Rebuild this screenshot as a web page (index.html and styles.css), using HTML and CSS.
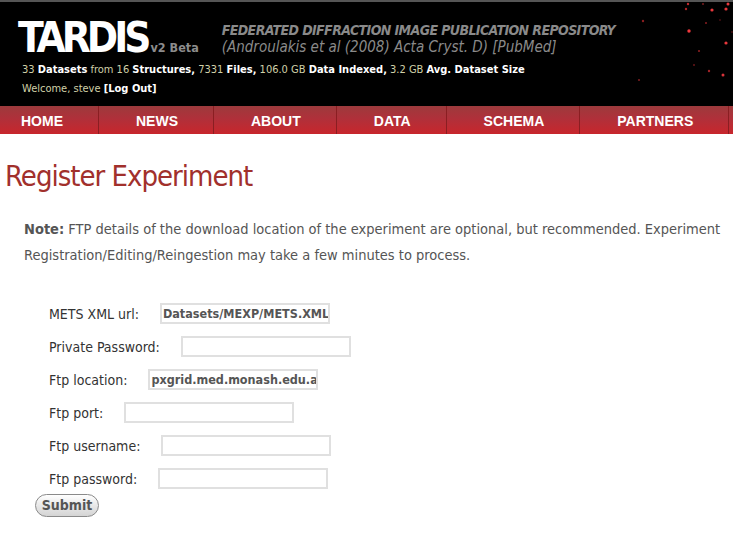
FILE: index.html
```html
<!DOCTYPE html>
<html>
<head>
<meta charset="utf-8">
<title>TARDIS - Register Experiment</title>
<link rel="stylesheet" href="styles.css">
</head>
<body>
<div class="header">
  <svg class="stars" width="110" height="90" viewBox="0 0 110 90">
    <circle cx="48" cy="2" r="1.2" fill="#c0282c"/>
    <circle cx="63" cy="2" r="1" fill="#7a1c1e"/>
    <circle cx="46" cy="7" r="1.2" fill="#b02428"/>
    <circle cx="72" cy="8" r="1.6" fill="#e8383c"/>
    <circle cx="86" cy="7" r="1.6" fill="#e8383c"/>
    <circle cx="88" cy="2" r="1.5" fill="#e8383c"/>
    <circle cx="66" cy="21" r="1" fill="#8a1e20"/>
    <circle cx="49" cy="29" r="1.7" fill="#f0383c"/>
    <circle cx="86" cy="41" r="1.6" fill="#e8383c"/>
    <circle cx="59" cy="49" r="1.1" fill="#8a1e20"/>
    <circle cx="54" cy="63" r="1" fill="#6a1618"/>
    <circle cx="69" cy="69" r="1.2" fill="#a02226"/>
    <circle cx="83" cy="73" r="1.5" fill="#d8333a"/>
    <circle cx="3" cy="19" r="1.2" fill="#8a1e20"/>
    <circle cx="-1" cy="78" r="1.1" fill="#7a1c1e"/>
    <circle cx="92" cy="30" r="0.9" fill="#4a1012"/>
    <circle cx="80" cy="18" r="0.9" fill="#4a1012"/>
  </svg>
  <div class="brand-row">
    <div class="brand">
      <span class="logo">TARDIS</span><span class="version">v2 Beta</span>
    </div>
    <div class="tagline">
      <div class="tag-title">FEDERATED DIFFRACTION IMAGE PUBLICATION REPOSITORY</div>
      <div class="tag-cite">(Androulakis et al (2008) Acta Cryst. D) [PubMed]</div>
    </div>
  </div>
  <div class="stats">
    <span class="num">33</span> <b>Datasets</b> <span class="num">from 16</span> <b>Structures,</b> <span class="num">7331</span> <b>Files,</b> <span class="num">106.0 GB</span> <b>Data Indexed,</b> <span class="num">3.2 GB</span> <b>Avg. Dataset Size</b>
  </div>
  <div class="welcome">
    <span class="num">Welcome, steve</span> <b>[Log Out]</b>
  </div>
</div>
<nav class="nav">
  <a class="nav-item first">HOME</a>
  <a class="nav-item">NEWS</a>
  <a class="nav-item">ABOUT</a>
  <a class="nav-item">DATA</a>
  <a class="nav-item">SCHEMA</a>
  <a class="nav-item">PARTNERS</a>
</nav>
<div class="content">
  <h1 class="title">Register Experiment</h1>
  <p class="note"><b>Note:</b> FTP details of the download location of the experiment are optional, but recommended. Experiment Registration/Editing/Reingestion may take a few minutes to process.</p>
  <form class="form">
    <div class="row"><label>METS XML url:</label><input class="field" type="text" value="Datasets/MEXP/METS.XML"></div>
    <div class="row"><label>Private Password:</label><input class="field" type="text" value=""></div>
    <div class="row"><label>Ftp location:</label><input class="field" type="text" value="pxgrid.med.monash.edu.au"></div>
    <div class="row"><label>Ftp port:</label><input class="field" type="text" value=""></div>
    <div class="row"><label>Ftp username:</label><input class="field" type="text" value=""></div>
    <div class="row"><label>Ftp password:</label><input class="field" type="text" value=""></div>
    <button class="submit" type="button">Submit</button>
  </form>
</div>
</body>
</html>
```
FILE: styles.css
```css
html, body {
  margin: 0;
  padding: 0;
  background: #fff;
}
body {
  font-family: "DejaVu Sans", sans-serif;
  font-stretch: condensed;
  width: 733px;
  overflow: hidden;
}
.header {
  position: relative;
  background: #000;
  border-top: 2px solid #555;
  height: 104px;
  color: #fff;
}
.stars {
  position: absolute;
  top: 0;
  left: 640px;
  overflow: visible;
}
.brand-row {
  display: flex;
  align-items: flex-start;
  padding-left: 18px;
  padding-top: 14px;
}
.brand {
  display: flex;
  align-items: baseline;
  height: 44px;
}
.logo {
  font-size: 42px;
  font-weight: bold;
  line-height: 44px;
  color: #fff;
  letter-spacing: -4px;
}
.version {
  font-size: 12.5px;
  font-weight: bold;
  color: #8c8c8c;
  margin-left: 3px;
}
.tagline {
  margin-left: 23px;
  padding-top: 6px;
  color: #8a8a8a;
  font-style: italic;
  font-size: 15px;
  line-height: 17px;
}
.tag-title {
  font-weight: bold;
  font-size: 14px;
  letter-spacing: -0.6px;
}
.stats, .welcome {
  padding-left: 22px;
  font-size: 11px;
  line-height: 19px;
}
.num {
  color: #d0d0a8;
}
.stats b, .welcome b {
  color: #fff;
}
.nav {
  display: flex;
  height: 28px;
  background: linear-gradient(#9c3a3c, #b0303a 45%, #c8262c);
}
.nav-item {
  font-family: "Liberation Sans", Arial, sans-serif;
  font-stretch: normal;
  font-weight: bold;
  font-size: 14px;
  color: #fff;
  line-height: 31px;
  padding: 0 35px 0 37px;
  border-right: 1px solid #8a1e22;
  white-space: nowrap;
}
.nav-item.first {
  padding-left: 21px;
}
.content {
  padding: 0 0 0 5px;
}
.title {
  margin: 25px 0 0 0;
  font-size: 29px;
  font-weight: normal;
  letter-spacing: -1px;
  color: #a1302c;
  line-height: 34px;
}
.note {
  margin: 23px 0 0 19px;
  font-size: 14.5px;
  line-height: 26px;
  color: #555;
}
.form {
  margin: 29px 0 0 0;
}
.row {
  display: flex;
  align-items: center;
  height: 33px;
  padding-left: 44px;
  font-size: 14px;
  color: #333;
}
.row label {
  margin-right: 21px;
}
.field {
  width: 170px;
  height: 21px;
  box-sizing: border-box;
  border: 2px solid #e0e0e0;
  padding: 0 0 0 1px;
  font-family: "DejaVu Sans", sans-serif;
  font-stretch: condensed;
  font-size: 12.5px;
  font-weight: bold;
  color: #555;
  outline: none;
  background: #fff;
}
.submit {
  margin-left: 30px;
  margin-top: -9px;
  width: 64px;
  height: 23px;
  border: 1px solid #8a8a8a;
  border-radius: 12px;
  background: linear-gradient(#ffffff, #e8e8e8 50%, #d4d4d4);
  font-family: "DejaVu Sans", sans-serif;
  font-stretch: condensed;
  font-size: 14px;
  font-weight: bold;
  color: #555;
  padding: 0;
}
```
